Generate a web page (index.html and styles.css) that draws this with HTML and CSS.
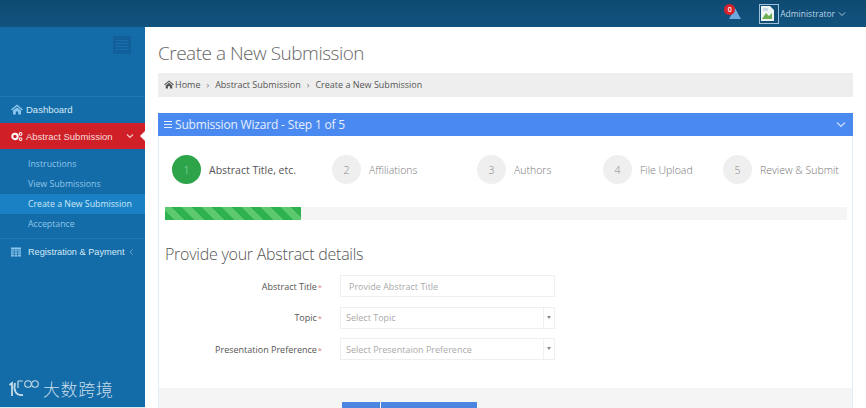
FILE: index.html
```html
<!DOCTYPE html>
<html lang="en">
<head>
<meta charset="utf-8">
<title>Create a New Submission</title>
<link rel="stylesheet" href="styles.css">
</head>
<body>
<header class="topbar">
  <div class="alerts">
    <svg class="bell" width="12" height="11" viewBox="0 0 12 11"><path d="M6 0 L12 11 H0 Z" fill="#6fa8dc"/></svg>
    <span class="badge">0</span>
  </div>
  <div class="avatar">
    <svg width="13" height="15" viewBox="0 0 13 15"><path d="M0 0h9l4 4v11H0z" fill="#eef3f4"/><path d="M1 13l4-6 3 3 3-3v6z" fill="#6cae52"/><path d="M2 2h5v3H2z" fill="#c9d8e4"/></svg>
  </div>
  <span class="user">Administrator</span>
  <svg class="user-caret" width="8" height="6" viewBox="0 0 8 6"><path d="M1 1.500 L4 4.500 L7 1.500" fill="none" stroke="#a9c6dc" stroke-width="1"/></svg>
</header>
<div class="shell">
  <aside class="sidebar">
    <div class="side-top">
      <div class="toggle"><span></span><span></span><span></span><span></span></div>
    </div>
    <nav class="menu">
      <a class="item item-dash">
        <svg width="12" height="11" viewBox="0 0 12 11"><path d="M6 .5 L12 5.600 L11 6.400 L6 2.200 L1 6.400 L0 5.600 Z M2 6.600 L6 3.400 L10 6.600 V10.500 H7.200 V7.600 H4.800 V10.500 H2 Z" fill="#8cc6ee"/></svg>
        <span>Dashboard</span>
      </a>
      <a class="item item-active">
        <svg width="12" height="11" viewBox="0 0 15 12"><circle cx="5" cy="6" r="3.400" fill="none" stroke="#fff" stroke-width="2.400"/><circle cx="12" cy="2.800" r="1.700" fill="none" stroke="#fff" stroke-width="1.300"/><circle cx="12" cy="9.200" r="1.700" fill="none" stroke="#fff" stroke-width="1.300"/></svg>
        <span class="grow">Abstract Submission</span>
        <svg width="8" height="6" viewBox="0 0 8 6"><path d="M1 1.500 L4 4.500 L7 1.500" fill="none" stroke="#f3c9c9" stroke-width="1.200"/></svg>
      </a>
      <ul class="sub">
        <li>Instructions</li>
        <li>View Submissions</li>
        <li class="sub-current">Create a New Submission</li>
        <li>Acceptance</li>
      </ul>
      <a class="item item-reg">
        <svg width="11" height="10" viewBox="0 0 11 10"><path d="M0 0h11v10H0z" fill="#8cc6ee"/><path d="M0 2.600h11M0 5h11M0 7.500h11M3.600 2.600V10M7.300 2.600V10" stroke="#136ca7" stroke-width=".8"/></svg>
        <span>Registration &amp; Payment</span>
        <svg width="5" height="8" viewBox="0 0 5 8"><path d="M4 1 L1 4 L4 7" fill="none" stroke="#6ea9d2" stroke-width="1"/></svg>
      </a>
    </nav>
    <div class="brand">
      <svg width="32" height="19" viewBox="0 0 32 19"><path d="M1.500 6 L4 4 V17" fill="none" stroke="#c7dcea" stroke-width="1.800"/><path d="M7 4 C5.500 10 7 17 15 16" fill="none" stroke="#c7dcea" stroke-width="1.800"/><path d="M10 2 h5 M10 2 v7" fill="none" stroke="#c7dcea" stroke-width="1.200"/><circle cx="20" cy="5" r="3.300" fill="none" stroke="#c7dcea" stroke-width="1.100"/><circle cx="27" cy="5" r="3.300" fill="none" stroke="#c7dcea" stroke-width="1.100"/></svg>
      <span>大数跨境</span>
    </div>
  </aside>
  <main class="content">
    <h1 class="page-title">Create a New Submission</h1>
    <div class="crumbs">
      <svg width="10" height="9" viewBox="0 0 12 11"><path d="M6 .5 L12 5.600 L11 6.400 L6 2.200 L1 6.400 L0 5.600 Z M2 6.600 L6 3.400 L10 6.600 V10.500 H7.200 V7.600 H4.800 V10.500 H2 Z" fill="#555"/></svg>
      <span class="crumb-home">Home</span><i>›</i><span>Abstract Submission</span><i>›</i><span>Create a New Submission</span>
    </div>
    <section class="panel">
      <div class="panel-head">
        <span class="bars"><b></b><b></b><b></b></span>
        <span class="grow">Submission Wizard - Step 1 of 5</span>
        <svg width="10" height="7" viewBox="0 0 10 7"><path d="M1 1.500 L5 5.500 L9 1.500" fill="none" stroke="#cfe0fb" stroke-width="1.200"/></svg>
      </div>
      <div class="panel-body">
        <ol class="steps">
          <li class="step step-on"><span class="num">1</span><span class="lbl">Abstract Title, etc.</span></li>
          <li class="step"><span class="num">2</span><span class="lbl">Affiliations</span></li>
          <li class="step"><span class="num">3</span><span class="lbl">Authors</span></li>
          <li class="step"><span class="num">4</span><span class="lbl">File Upload</span></li>
          <li class="step"><span class="num">5</span><span class="lbl">Review &amp; Submit</span></li>
        </ol>
        <div class="progress"><div class="progress-fill" style="width:20%"></div></div>
        <h2 class="form-title">Provide your Abstract details</h2>
        <form class="form">
          <div class="row">
            <label>Abstract Title<em>*</em></label>
            <div class="field field-input">Provide Abstract Title</div>
          </div>
          <div class="row">
            <label>Topic<em>*</em></label>
            <div class="field field-select"><span class="grow">Select Topic</span><span class="arrow"></span></div>
          </div>
          <div class="row">
            <label>Presentation Preference<em>*</em></label>
            <div class="field field-select"><span class="grow">Select Presentaion Preference</span><span class="arrow"></span></div>
          </div>
        </form>
      </div>
      <div class="panel-foot">
        <span class="btn btn-a"></span><span class="btn btn-b"></span>
      </div>
    </section>
  </main>
</div>
</body>
</html>
```
FILE: styles.css
```css
* { box-sizing: border-box; }
html, body { margin: 0; height: 408px; overflow: hidden; }
body { font-family: "Open Sans", sans-serif; color: #555; background: #fff; }
.grow { flex: 1; }

.topbar {
  height: 27px; display: flex; align-items: center; padding-right: 20px;
  justify-content: flex-end;
  background: linear-gradient(#0f4a72, #11537f);
}
.alerts { position: relative; width: 12px; height: 11px; margin-right: 18px; }
.bell { display: block; }
.badge {
  position: absolute; left: -5px; top: -4px; width: 11px; height: 11px; border-radius: 50%;
  background: #d8222a; color: #fff; font-size: 7px; line-height: 11px; text-align: center; font-weight: 600;
}
.avatar {
  width: 20px; height: 20px; border: 1px solid #9cc0da;
  display: flex; background: #124d75; padding: 1px;
}
.avatar svg { display: block; }
.user { font-size: 8.500px; color: #bcd3e4; margin-left: 1px; margin-right: 3px; white-space: nowrap; }
.user-caret { display: block; }

.shell { display: flex; height: 381px; }
.sidebar {
  width: 145px; flex: none; background: #136ca7; display: flex; flex-direction: column;
  border-bottom: 1px solid #d3ebf3;
}
.side-top { height: 70px; border-bottom: 1px solid #1c78b3; display: flex; justify-content: flex-end; padding: 9px 14px 0 0; }
.toggle {
  width: 18px; height: 18px; background: #11609b; display: flex; flex-direction: column;
  justify-content: center; gap: 2px; padding: 0 3px;
}
.toggle span { height: 1px; background: #1a6eab; }
.menu { flex: 1; }
.item {
  display: flex; align-items: center; color: #fff; font-family: "Liberation Sans", sans-serif;
  font-size: 9.500px; white-space: nowrap;
}
.item-dash { height: 26px; padding: 0 0 1px 11px; gap: 3px; color: #d5e9f6; }
.item-active {
  position: relative; height: 26px; padding: 0 11px 0 11px; gap: 3px; background: #cf2027; color: #f6dcdc;
}
.item-active::after {
  content: ""; position: absolute; right: 0; top: 8px;
  border-top: 5px solid transparent; border-bottom: 5px solid transparent; border-right: 5px solid #fff;
}
.sub {
  list-style: none; margin: 0; padding: 5px 0 4px; border-bottom: 1px solid #1c78b3;
  font-size: 8.750px; color: #8fc6ec;
}
.sub li { height: 20px; line-height: 20px; padding-left: 28px; }
.sub .sub-current { background: #1a82c4; color: #cfe8f8; }
.item-reg { height: 25px; padding: 0 11px; gap: 7px; color: #d5e9f6; font-size: 9.200px; }
.item-reg span { margin-right: -2px; }
.brand {
  display: flex; align-items: center; gap: 3px; height: 27px; padding: 0 0 10px 8px; color: #c7dcea;
  font-family: "Noto Sans CJK SC", sans-serif; font-size: 17px; letter-spacing: .6px; font-weight: 300;
}
.brand svg { display: block; flex: none; }

.content { flex: 1; padding: 0 13px 0 13px; min-width: 0; }
.page-title { margin: 0; height: 46px; font-size: 19px; letter-spacing: -.5px; font-weight: 300; color: #666; line-height: 52px; }
.crumbs {
  height: 24px; background: #eeeeee; display: flex; align-items: center; padding: 0 0 1px 6px;
  font-size: 9px; color: #555;
}
.crumb-home { margin-left: 1px; }
.crumbs i { font-style: normal; margin: 0 6px; color: #777; }
.panel { margin-top: 16px; border: 1px solid #e3edf8; border-top: 0; }
.panel-head {
  height: 23px; background: #4a89f0; color: #e6effd; display: flex; align-items: center;
  padding: 0 7px 0 6px; font-size: 12px; letter-spacing: -.18px; margin: 0 -1px;
}
.bars { display: flex; flex-direction: column; gap: 1.500px; margin-right: 3px; }
.bars b { display: block; width: 8px; height: 1.500px; background: #e6effd; }
.panel-body { padding: 0 5px 0 6px; height: 252px; }
.steps {
  list-style: none; margin: 0; padding: 19px 0 0 7px;
  display: grid; grid-template-columns: 160px 145px 126px 120px auto;
}
.step { display: flex; align-items: center; gap: 8px; font-size: 10.500px; font-weight: 300; color: #777; white-space: nowrap; }
.num {
  width: 29px; height: 29px; border-radius: 50%; background: #efefef; color: #8a8a8a;
  display: flex; align-items: center; justify-content: center;
}
.step-on .num { background: #2ea44a; color: #a8dcb6; }
.step-on .lbl { color: #555; font-weight: 400; }
.progress { margin-top: 23px; height: 13px; background: #f5f5f5; }
.progress-fill {
  height: 100%;
  background: repeating-linear-gradient(45deg, #2eb24f 0 7px, #5cc96f 7px 14px);
}
.form-title { margin: 24px 0 0; font-size: 16px; letter-spacing: -.25px; font-weight: 300; color: #555; line-height: 20px; }
.form { margin-top: 11px; display: flex; flex-direction: column; gap: 9.500px; }
.row { display: flex; align-items: center; height: 22px; }
.row label { width: 157px; text-align: right; font-size: 9px; color: #555; white-space: nowrap; }
.row em { color: #e58080; font-style: normal; margin-left: 1px; font-size: 7.500px; }
.field {
  width: 215px; height: 22px; margin-left: 18px; border: 1px solid #efefef; display: flex; align-items: center;
  font-size: 9px; color: #aaa;
}
.field-input { padding-left: 8px; }
.field-select { padding-left: 5px; }
.arrow { width: 11px; height: 100%; border-left: 1px solid #f0f0f0; position: relative; }
.arrow::after {
  content: ""; position: absolute; left: 3px; top: 8px;
  border-left: 2px solid transparent; border-right: 2px solid transparent; border-top: 3px solid #888;
}
.panel-foot { height: 30px; background: #f5f5f5; padding: 14px 0 0 183px; display: flex; gap: 1px; }
.btn { display: block; height: 12px; background: #4a86e0; }
.btn-a { width: 38px; }
.btn-b { width: 96px; }
```
